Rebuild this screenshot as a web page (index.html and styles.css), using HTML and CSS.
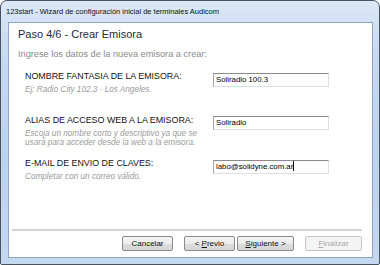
FILE: index.html
```html
<!DOCTYPE html>
<html lang="es">
<head>
    <meta charset="UTF-8">
    <title>123start - Wizard</title>
    <link rel="stylesheet" href="styles.css">
</head>
<body>
    <!-- Ventana -->
    <div class="window">
        <div class="titlebar">123start - Wizard de configuración inicial de terminales Audicom</div>

        <div class="client">
            <!-- Cabecera del paso -->
            <div class="head">
                <h1>Paso 4/6 - Crear Emisora</h1>
                <p>Ingrese los datos de la nueva emisora a crear:</p>
            </div>

            <!-- Campos -->
            <div class="fields">
                <div class="field">
                    <div class="label">
                        <div class="name">NOMBRE FANTASIA DE LA EMISORA:</div>
                        <div class="hint">Ej: Radio City 102.3 - Los Angeles.</div>
                    </div>
                    <div class="input">Soliradio 100.3</div>
                </div>
                <div class="field">
                    <div class="label">
                        <div class="name">ALIAS DE ACCESO WEB A LA EMISORA:</div>
                        <div class="hint">Escoja un nombre corto y descriptivo ya que se<br>usará para acceder desde la web a la emisora.</div>
                    </div>
                    <div class="input">Soliradio</div>
                </div>
                <div class="field">
                    <div class="label">
                        <div class="name">E-MAIL DE ENVIO DE CLAVES:</div>
                        <div class="hint">Completar con un correo válido.</div>
                    </div>
                    <div class="input">labo@solidyne.com.ar<span class="caret"></span></div>
                </div>
            </div>

            <!-- Botones -->
            <div class="footer">
                <button class="btn btn-cancel">Cancelar</button>
                <div class="nav-pair">
                    <button class="btn">&lt; <u>P</u>revio</button>
                    <button class="btn btn-wide"><u>S</u>iguiente &gt;</button>
                </div>
                <button class="btn btn-wide" disabled><u>F</u>inalizar</button>
            </div>
        </div>
    </div>
</body>
</html>
```

FILE: styles.css
```css
/* General */
body {
    margin: 0;
    width: 380px;
    height: 265px;
    background: #ffffff;
    font-family: "Liberation Sans", Arial, sans-serif;
    color: #000000;
}

/* Marco de la ventana */
.window {
    box-sizing: border-box;
    width: 380px;
    height: 265px;
    border: 1px solid #4a5260;
    border-radius: 7px 7px 2px 2px;
    background: linear-gradient(180deg, #dbe8f7 0%, #c6daf1 20%, #bcd3ee 60%, #c4d8ef 100%);
    display: flex;
    flex-direction: column;
}

.titlebar {
    height: 21px;
    line-height: 22px;
    padding-left: 5px;
    font-size: 7.5px;
    color: #111111;
}

.client {
    flex: 1;
    margin: 0 6px 6px 7px;
    background: #ffffff;
    border: 1px solid #8fa5c0;
    display: flex;
    flex-direction: column;
}

/* Cabecera */
.head {
    padding: 2px 9px 0;
}

.head h1 {
    margin: 0;
    font-size: 11px;
    font-weight: normal;
    color: #1d2a3a;
    line-height: 18px;
}

.head p {
    margin: 5px 0 0;
    font-size: 9.2px;
    color: #8a8a8a;
    line-height: 12px;
}

/* Campos */
.fields {
    padding: 11px 0 0 16px;
    display: flex;
    flex-direction: column;
    gap: 15.5px;
}

.field {
    display: flex;
    align-items: flex-start;
    height: 28px;
}

.label {
    width: 188px;
}

.name {
    font-size: 8.9px;
    line-height: 11px;
    color: #111111;
}

.hint {
    font-size: 8.2px;
    line-height: 9.5px;
    font-style: italic;
    color: #9a9a9a;
    margin-top: 3px;
}

.input {
    box-sizing: border-box;
    width: 116px;
    height: 14px;
    margin-top: 1.5px;
    border: 1px solid #dcdfe3;
    border-top-color: #8a8a8a;
    border-left-color: #a8a8a8;
    padding-left: 2px;
    font-size: 7.8px;
    line-height: 12px;
    white-space: nowrap;
}

.caret {
    display: inline-block;
    width: 1px;
    height: 10px;
    background: #000000;
    vertical-align: -2px;
}

/* Botones */
.footer {
    margin: auto 10px 0 3px;
    border-top: 2px solid #d4d4d4;
    padding: 5px 0 6px 110px;
    display: flex;
    gap: 11px;
}

.nav-pair {
    display: flex;
    gap: 2px;
}

.btn {
    width: 51px;
    height: 15px;
    padding: 0;
    border: 1px solid #8a8a8a;
    border-radius: 2px;
    background: linear-gradient(180deg, #f6f6f6 0%, #ececec 50%, #dcdcdc 51%, #d6d6d6 100%);
    font-family: "Liberation Sans", Arial, sans-serif;
    font-size: 8px;
    color: #111111;
}

.btn-wide {
    width: 57px;
}

.btn-cancel {
    width: 51px;
}

.btn:disabled {
    border-color: #c2c6ca;
    background: #f4f4f4;
    color: #a8a8a8;
}
```
